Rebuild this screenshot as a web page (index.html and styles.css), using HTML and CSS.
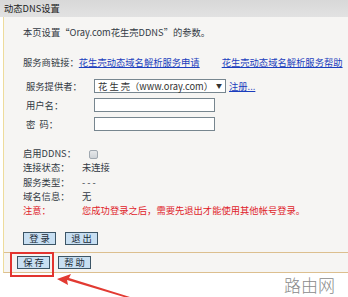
FILE: index.html
```html
<!DOCTYPE html>
<html lang="zh-CN">
<head>
    <meta charset="UTF-8">
    <title>动态DNS设置</title>
    <link rel="stylesheet" href="styles.css">
</head>
<body>
    <div class="page">
        <div class="title-bar">动态DNS设置</div>

        <div class="panel">
            <div class="main">
                <p class="intro">本页设置“Oray.com花生壳DDNS”的参数。</p>

                <p class="links">服务商链接：<a href="#">花生壳动态域名解析服务申请</a><a class="gap" href="#">花生壳动态域名解析服务帮助</a></p>

                <div class="form">
                    <div class="row">
                        <span class="label">服务提供者：</span>
                        <div class="select"><span>花 生 壳（www.oray.com）</span><span class="caret">▼</span></div>
                        <a class="reg" href="#">注册...</a>
                    </div>
                    <div class="row">
                        <span class="label">用户名：</span>
                        <input class="field" type="text">
                    </div>
                    <div class="row">
                        <span class="label">密&nbsp;&nbsp;码：</span>
                        <input class="field" type="password">
                    </div>
                </div>

                <div class="status">
                    <span class="key">启用DDNS：</span><span class="val"><span class="check"></span></span>
                    <span class="key">连接状态：</span><span class="val">未连接</span>
                    <span class="key">服务类型：</span><span class="val">- - -</span>
                    <span class="key">域名信息：</span><span class="val">无</span>
                    <span class="key note">注意：</span><span class="val note">您成功登录之后，需要先退出才能使用其他帐号登录。</span>
                </div>

                <div class="actions">
                    <button class="btn">登 录</button>
                    <button class="btn">退 出</button>
                </div>
            </div>

            <div class="footer">
                <button class="btn">保 存</button>
                <button class="btn">帮 助</button>
            </div>
        </div>

        <!-- 标注 -->
        <div class="mark"></div>
        <svg class="arrow" width="100" height="30" viewBox="0 0 100 30">
            <polygon points="17,12 31,7 29,11 90,30 84,30 27,13 28,18" fill="#e23a32"/>
        </svg>
        <div class="logo">路由网</div>
    </div>
</body>
</html>
```

FILE: styles.css
```css
* {
    box-sizing: border-box;
    margin: 0;
    padding: 0;
}
body {
    font-family: "SimSun", "Noto Sans CJK SC", sans-serif;
    font-size: 9.3px;
    line-height: 14px;
    color: #333a44;
    background: #fff;
}
.page {
    position: relative;
    width: 348px;
    height: 297px;
    overflow: hidden;
}
.title-bar {
    height: 17px;
    line-height: 17px;
    padding-left: 4px;
    background: linear-gradient(#d8d8d8, #e2e2e2);
    color: #222;
}
.panel {
    margin-left: 3px;
    background: #f6f5f3;
    border-left: 1px solid #eedc9c;
    border-bottom: 1px solid #dcbf8f;
}
.main {
    padding: 8px 0 7px 19px;
    border-bottom: 1px solid #dcbf8f;
}
.intro,
.links {
    height: 14px;
    white-space: nowrap;
}
.links {
    margin-top: 16px;
}
a {
    color: #1a3dbd;
}
.links .gap {
    margin-left: 22px;
}
.form {
    margin-top: 10px;
    padding-left: 3px;
    display: flex;
    flex-direction: column;
    gap: 5px;
}
.row {
    display: flex;
    align-items: center;
    height: 14px;
    white-space: nowrap;
}
.label {
    width: 68px;
    flex-shrink: 0;
}
.select {
    width: 132px;
    height: 14px;
    border: 1px solid #77868f;
    background: #fff;
    display: flex;
    justify-content: space-between;
    align-items: center;
    padding: 0 3px;
    font-family: "Noto Sans CJK SC", sans-serif;
    font-size: 9.3px;
    color: #333;
}
.caret {
    font-size: 6px;
}
.reg {
    margin-left: 3px;
}
.field {
    width: 121px;
    height: 14px;
    border: 1px solid #77868f;
    background: #fff;
}
.status {
    margin-top: 15px;
    display: grid;
    grid-template-columns: 59px 1fr;
    grid-auto-rows: 14.3px;
    align-items: center;
    white-space: nowrap;
}
.check {
    display: inline-block;
    width: 9px;
    height: 9px;
    margin-left: 7px;
    border: 1px solid #a0a8b0;
    border-radius: 2px;
    background: linear-gradient(#e6e8ea, #cfd3d7);
    vertical-align: middle;
}
.note {
    color: #e0232a;
}
.actions {
    margin-top: 15px;
    display: flex;
    gap: 9px;
}
.btn {
    width: 33px;
    height: 13px;
    border: 1px solid #3c5566;
    background: #c8dff2;
    font-family: "SimSun", "Noto Sans CJK SC", sans-serif;
    font-size: 9.3px;
    line-height: 11px;
    color: #1c2a36;
}
.footer {
    padding: 3px 0 3px 13px;
    display: flex;
    gap: 8px;
}
.mark {
    position: absolute;
    left: 10px;
    top: 252px;
    width: 44px;
    height: 25px;
    border: 2px solid #e2342f;
}
.arrow {
    position: absolute;
    left: 40px;
    top: 267px;
}
.logo {
    position: absolute;
    left: 284px;
    top: 275px;
    font-family: "Noto Sans CJK SC", sans-serif;
    font-size: 17px;
    font-weight: 300;
    line-height: 20px;
    color: #8a8a8a;
    white-space: nowrap;
}
```
